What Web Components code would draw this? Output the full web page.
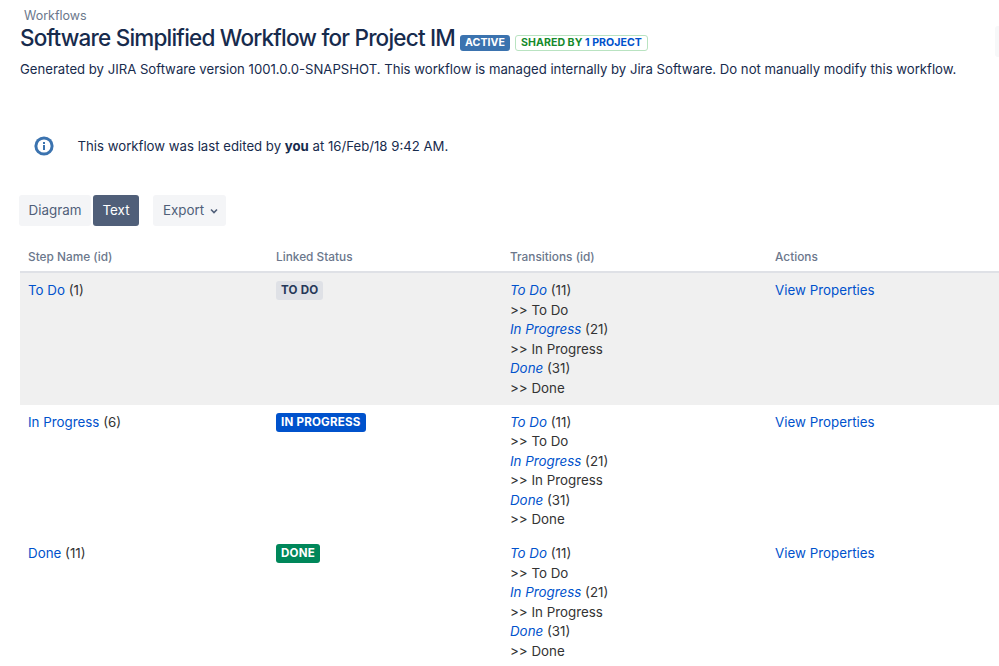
<!DOCTYPE html>
<html>
<head>
<meta charset="utf-8">
<title>Workflows</title>
<style>
  html, body { margin: 0; background: #fff; overflow: hidden; }
  body { font-family: Inter, "Liberation Sans", sans-serif; font-size: 14px; color: #172b4d; }
</style>
</head>
<body>
<workflow-page></workflow-page>

<template id="header-tpl">
  <style>
    :host { display: block; padding: 8px 20px 0; position: relative; }
    .crumb { color: #6b778c; font-size: 12.5px; line-height: 15px; padding-left: 4px; }
    .title { display: flex; align-items: center; gap: 5px; height: 28px; margin-top: 1px; }
    h1 { margin: 0; font-size: 22.5px; font-weight: 500; line-height: 28px; letter-spacing: -0.79px; color: #172b4d; white-space: nowrap; }
    .lozenge { font-size: 10.6px; font-weight: 700; letter-spacing: 0.04px; border-radius: 3px; height: 16px; line-height: 16px; box-sizing: border-box; white-space: nowrap; margin-top: 9px; }
    .active { background: #3b73af; color: #fff; padding: 0 5px; }
    .shared { border: 1px solid #b9e3c1; color: #14892c; line-height: 14px; padding: 0 5px; }
    .shared b { color: #0052cc; font-weight: 700; }
    p { margin: 8px 0 0; padding-bottom: 1px; font-size: 13.15px; line-height: 19px; white-space: nowrap; }
    .edge { position: absolute; right: -2px; top: 26px; width: 6px; height: 31px; background: #f7f8f9; border-radius: 3px; }
  </style>
  <div class="crumb">Workflows</div>
  <div class="title">
    <h1>Software Simplified Workflow for Project IM</h1>
    <span class="lozenge active">ACTIVE</span>
    <span class="lozenge shared">SHARED BY <b>1 PROJECT</b></span>
  </div>
  <p>Generated by JIRA Software version 1001.0.0-SNAPSHOT. This workflow is managed internally by Jira Software. Do not manually modify this workflow.</p>
  <div class="edge"></div>
</template>

<template id="notice-tpl">
  <style>
    :host { display: flex; align-items: center; gap: 23.5px; padding: 0 34px; margin-top: 54px; height: 24px; font-size: 13.2px; }
    svg { width: 20px; height: 20px; flex: none; }
    b { font-weight: 700; }
  </style>
  <svg viewBox="0 0 20 20">
    <circle cx="10" cy="10" r="9.6" fill="#3b73af"></circle>
    <circle cx="10" cy="10" r="6.6" fill="#fff"></circle>
    <rect x="9" y="9" width="2" height="5" fill="#3b73af"></rect>
    <rect x="9" y="6" width="2" height="2" fill="#3b73af"></rect>
  </svg>
  <span><slot></slot></span>
</template>

<template id="toolbar-tpl">
  <style>
    :host { display: flex; align-items: flex-start; padding-left: 19px; margin-top: 37px; font-size: 13.4px; color: #505f79; }
    .btn { height: 31px; line-height: 31px; background: #f4f5f7; border-radius: 3px; box-sizing: border-box; }
    .diagram { width: 72px; text-align: center; }
    .text { width: 46px; margin-left: 2px; text-align: center; background: #505f79; color: #fff; }
    .export { width: 73px; margin-left: 14px; padding-left: 10px; display: flex; align-items: center; gap: 6px; }
    svg { width: 8px; height: 6px; }
  </style>
  <div class="btn diagram">Diagram</div>
  <div class="btn text">Text</div>
  <div class="btn export">Export
    <svg viewBox="0 0 8 6"><path d="M1 1.5l3 3 3-3" fill="none" stroke="#505f79" stroke-width="1.6"></path></svg>
  </div>
</template>

<template id="table-tpl">
  <style>
    :host { display: block; margin-left: 20px; margin-top: 20px; }
    .head { display: grid; grid-template-columns: 248px 234px 265px 1fr; height: 25px; border-bottom: 2px solid #dfe1e6; color: #6b778c; font-size: 11.85px; font-weight: 500; line-height: 23px; }
    .head div { padding-left: 8px; }
  </style>
  <div class="head">
    <div>Step Name (id)</div>
    <div>Linked Status</div>
    <div>Transitions (id)</div>
    <div>Actions</div>
  </div>
  <slot></slot>
</template>

<template id="row-tpl">
  <style>
    :host { display: grid; grid-template-columns: 248px 234px 265px 1fr; padding: 8.25px 0 6.25px; font-size: 13.35px; line-height: 19.5px; color: #333; }
    :host([shaded]) { background: #f0f0f0; }
    .cell { padding-left: 8px; }
    a { color: #0052cc; text-decoration: none; }
    .lines a { font-style: italic; }
    .lines div { white-space: nowrap; }
    .status { display: inline-block; height: 19px; line-height: 19px; padding: 0 5px; border-radius: 3px; font-size: 11.6px; font-weight: 700; letter-spacing: 0.2px; vertical-align: top; }
    :host([status="todo"]) .status { background: #dfe1e6; color: #253858; }
    :host([status="progress"]) .status { background: #0052cc; color: #fff; }
    :host([status="done"]) .status { background: #00875a; color: #fff; }
  </style>
  <div class="cell"><a class="step"></a> <span class="id"></span></div>
  <div class="cell"><span class="status"></span></div>
  <div class="cell lines">
    <div><a>To Do</a> (11)</div>
    <div>&gt;&gt; To Do</div>
    <div><a>In Progress</a> (21)</div>
    <div>&gt;&gt; In Progress</div>
    <div><a>Done</a> (31)</div>
    <div>&gt;&gt; Done</div>
  </div>
  <div class="cell"><a>View Properties</a></div>
</template>

<template id="page-tpl">
  <style>:host { display: block; }</style>
  <wf-header></wf-header>
  <wf-notice>This workflow was last edited by <b>you</b> at 16/Feb/18 9:42 AM.</wf-notice>
  <wf-toolbar></wf-toolbar>
  <wf-table>
    <wf-row shaded step="To Do" step-id="1" status="todo" label="TO DO"></wf-row>
    <wf-row step="In Progress" step-id="6" status="progress" label="IN PROGRESS"></wf-row>
    <wf-row step="Done" step-id="11" status="done" label="DONE"></wf-row>
  </wf-table>
</template>

<script>
  class TemplateElement extends HTMLElement {
    constructor() {
      super();
      const tpl = document.getElementById(this.constructor.templateId);
      this.attachShadow({ mode: 'open' }).appendChild(tpl.content.cloneNode(true));
    }
  }

  class WfHeader extends TemplateElement { static templateId = 'header-tpl'; }
  class WfNotice extends TemplateElement { static templateId = 'notice-tpl'; }
  class WfToolbar extends TemplateElement { static templateId = 'toolbar-tpl'; }
  class WfTable extends TemplateElement { static templateId = 'table-tpl'; }
  class WorkflowPage extends TemplateElement { static templateId = 'page-tpl'; }

  class WfRow extends TemplateElement {
    static templateId = 'row-tpl';
    connectedCallback() {
      const root = this.shadowRoot;
      root.querySelector('.step').textContent = this.getAttribute('step');
      root.querySelector('.id').textContent = `(${this.getAttribute('step-id')})`;
      root.querySelector('.status').textContent = this.getAttribute('label');
    }
  }

  customElements.define('wf-header', WfHeader);
  customElements.define('wf-notice', WfNotice);
  customElements.define('wf-toolbar', WfToolbar);
  customElements.define('wf-table', WfTable);
  customElements.define('wf-row', WfRow);
  customElements.define('workflow-page', WorkflowPage);
</script>
</body>
</html>
